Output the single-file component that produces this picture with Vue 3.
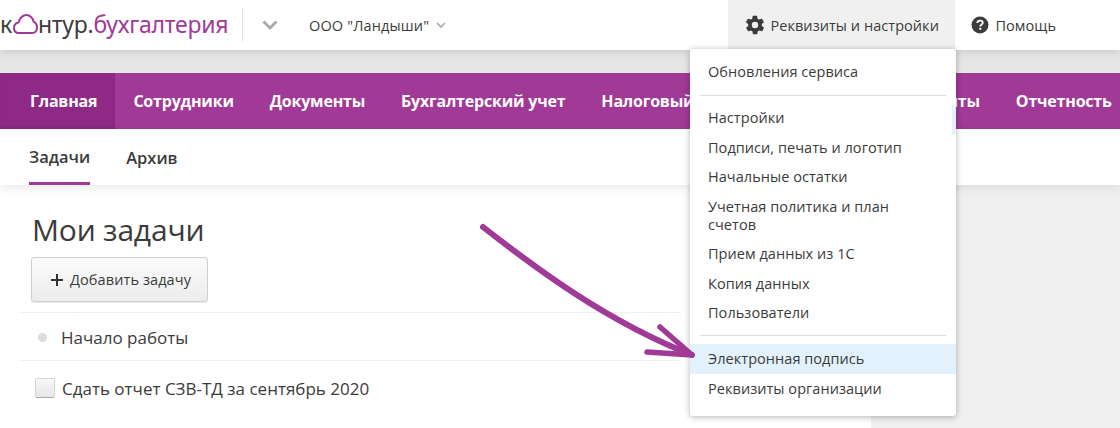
<script setup>
const tabs = [
  { label: 'Главная', kind: 'on' },
  { label: 'Сотрудники' },
  { label: 'Документы' },
  { label: 'Бухгалтерский учет' },
  { label: 'Налоговый учет', kind: 'wide' },
  { label: 'Контрагенты', kind: 'end' },
  { label: 'Отчетность' }
]
const menuTop = ['Настройки', 'Подписи, печать и логотип', 'Начальные остатки', 'Учетная политика и план счетов', 'Прием данных из 1С', 'Копия данных', 'Пользователи']
</script>

<template>
  <div class="page">
    <header class="top">
      <div class="logo"><span>к</span><svg class="cloud" width="25" height="22" viewBox="15 10 25 22"><path d="M21 30C17.500 30 16 27.500 16 25C16 22 18 20 20.500 19.500C22 15 25 12 28.500 12C32 12 35 15 35.500 18.500C37.500 19.500 39 22 39 24.500C39 28 37 30 34 30Z" fill="none" stroke="#a03a96" stroke-width="2"/></svg><span>нтур.</span><span class="logo-accent">бухгалтерия</span></div>
      <div class="sep"></div>
      <svg class="chev-big" width="16" height="10" viewBox="0 0 16 10"><path d="M1.500 1.500L8 8L14.500 1.500" fill="none" stroke="#a9a9a9" stroke-width="2.800"/></svg>
      <div class="org">ООО "Ландыши"<svg class="chev-small" width="10" height="7" viewBox="0 0 10 7"><path d="M1 1L5 5L9 1" fill="none" stroke="#a9a9a9" stroke-width="1.600"/></svg></div>
      <div class="top-right">
        <div class="top-btn active">
          <svg width="22" height="22" viewBox="0 0 24 24"><path fill="#3c3c3c" d="M19.400 13c.1-.3.100-.7.100-1s0-.7-.1-1l2.100-1.600c.2-.2.200-.4.100-.6l-2-3.500c-.1-.2-.4-.3-.6-.2l-2.500 1c-.5-.4-1.100-.7-1.700-1l-.4-2.600c0-.3-.2-.5-.5-.5h-4c-.3 0-.5.200-.5.500l-.4 2.600c-.6.300-1.200.6-1.700 1l-2.500-1c-.2-.1-.5 0-.6.200l-2 3.500c-.1.200-.1.400.1.600L4.600 11c-.1.300-.1.700-.1 1s0 .7.100 1l-2.100 1.600c-.2.200-.2.400-.1.600l2 3.500c.1.200.4.300.6.200l2.500-1c.5.400 1.100.7 1.700 1l.4 2.600c0 .3.200.5.500.5h4c.3 0 .5-.2.500-.5l.4-2.600c.6-.3 1.200-.6 1.700-1l2.500 1c.2.100.5 0 .6-.2l2-3.500c.1-.2.100-.4-.1-.6zM12 15.500a3.500 3.500 0 1 1 0-7 3.500 3.500 0 0 1 0 7z"/></svg>
          Реквизиты и настройки
        </div>
        <div class="top-btn help">
          <svg width="18" height="18" viewBox="0 0 18 18"><circle cx="9" cy="9" r="8.500" fill="#3c3c3c"/><path d="M6.300 7C6.400 5.500 7.500 4.600 9.100 4.600C10.700 4.600 11.800 5.500 11.800 6.800C11.800 8.600 9.300 8.600 9.300 10.600" fill="none" stroke="#fff" stroke-width="1.800"/><rect x="8.300" y="11.800" width="2" height="2" fill="#fff"/></svg>
          Помощь
        </div>
      </div>
    </header>

    <div class="band"></div>

    <nav class="nav">
      <div v-for="t in tabs" :key="t.label" class="tab" :class="t.kind">{{ t.label }}</div>
    </nav>

    <div class="sub">
      <div class="sub-item on">Задачи</div>
      <div class="sub-item">Архив</div>
    </div>

    <main class="body">
      <section class="content">
        <h1 class="title">Мои задачи</h1>
        <button class="add"><span class="plus"></span>Добавить задачу</button>
        <div class="rows">
          <div class="row row-head"><i class="dot"></i>Начало работы</div>
          <div class="row row-task"><i class="box"></i>Сдать отчет СЗВ-ТД за сентябрь 2020</div>
        </div>
      </section>
      <aside class="side"></aside>
    </main>

    <div class="menu">
      <div class="mi first">Обновления сервиса</div>
      <hr class="div" />
      <div class="group">
        <div v-for="m in menuTop" :key="m" class="mi">{{ m }}</div>
      </div>
      <hr class="div div2" />
      <div class="mi hl">Электронная подпись</div>
      <div class="mi">Реквизиты организации</div>
    </div>

    <svg class="arrow" width="240" height="150" viewBox="0 0 240 150">
      <path d="M5 5C60 48 130 100 214 133" fill="none" stroke="#a03a96" stroke-width="6" stroke-linecap="round"/>
      <path d="M169 130L214 133L182 105" fill="none" stroke="#a03a96" stroke-width="5.500" stroke-linecap="round" stroke-linejoin="round"/>
    </svg>
  </div>
</template>

<style>
html, body { margin: 0; background: #fff; }
</style>

<style scoped>
.page { position: relative; width: 1120px; height: 428px; overflow: hidden; background: #fff; font-family: "Open Sans", "Noto Sans", sans-serif; color: #3b3b3b; }
.top { position: relative; z-index: 2; height: 50px; display: flex; align-items: center; background: #fff; box-shadow: 0 2px 8px rgba(0,0,0,.12); }
.logo { display: flex; align-items: center; width: 242px; font-family: "Noto Sans", sans-serif; font-size: 23px; letter-spacing: -.25px; color: #3c3c3c; height: 50px; margin-top: -2px; white-space: nowrap; }
.cloud { margin: 0 0 0 1px; flex: none; }
.logo-accent { color: #a03a96; }
.sep { width: 1px; height: 34px; background: #e4e4e4; }
.chev-big { margin-left: 19px; }
.org { margin-left: 31px; font-size: 14.500px; letter-spacing: .15px; display: flex; align-items: center; gap: 7px; white-space: nowrap; }
.top-right { margin-left: auto; display: flex; height: 50px; margin-right: 48px; }
.top-btn { display: flex; align-items: center; font-size: 14.500px; letter-spacing: .05px; }
.help { padding: 0 16px; gap: 6px; }
.active { background: #f0f0f0; width: 227px; box-sizing: border-box; white-space: nowrap; padding-left: 16px; gap: 4px; }
.band { height: 23px; background: #e6e6e6; }
.nav { height: 56px; background: #a03a96; display: flex; color: #fff; font-weight: 700; font-size: 16px; letter-spacing: -.2px; }
.tab { display: flex; align-items: center; padding: 0 18px; white-space: nowrap; flex: none; }
.on.tab { background: #8e2a85; padding: 0 18px 0 30px; box-shadow: inset 0 -2px 2px rgba(0,0,0,.08); }
.wide { width: 232.500px; }
.end { width: 110px; justify-content: flex-end; }
.sub { position: relative; z-index: 1; height: 56px; display: flex; gap: 36px; padding-left: 29px; background: #fff; box-shadow: 0 3px 10px rgba(0,0,0,.09); font-size: 16.500px; font-weight: 600; }
.sub-item { display: flex; align-items: center; height: 56px; box-sizing: border-box; }
.sub-item.on { border-bottom: 3px solid #a03a96; padding-top: 2px; }
.body { display: flex; height: 243px; }
.content { width: 871px; box-sizing: border-box; padding: 24px 190px 0 20px; }
.side { flex: 1; background: #f0f0f0; }
.title { margin: 0 0 0 12px; font-size: 30px; line-height: 42px; font-weight: 400; letter-spacing: -.2px; }
.add { display: flex; align-items: center; margin: 6px 0 10px 11px; width: 177px; height: 45px; padding: 0 0 0 19px; border: 1px solid #cfcfcf; border-radius: 3px; background: linear-gradient(#fbfbfb, #ececec); font: 14.500px "Open Sans", sans-serif; letter-spacing: .1px; color: #3b3b3b; box-shadow: 0 1px 1px rgba(0,0,0,.1); }
.plus { width: 12px; height: 12px; margin-right: 7px; flex: none; background: linear-gradient(#333, #333) center / 12px 2px no-repeat, linear-gradient(#333, #333) center / 2px 12px no-repeat; }
.row { display: flex; align-items: center; font-size: 17px; border-top: 1px solid #efefef; padding-top: 2px; box-sizing: border-box; }
.row-head { padding-left: 18px; height: 48px; }
.row-task { padding-left: 15px; height: 55px; padding-top: 0; }
.dot { width: 9px; height: 9px; border-radius: 50%; background: #dcdcdc; margin-right: 14px; }
.box { width: 18px; height: 18px; margin-right: 7px; border: 1px solid #d4d4d4; border-bottom-color: #aaa; border-radius: 2px; background: linear-gradient(#f8f8f8, #e6e6e6); }
.menu { position: absolute; z-index: 3; left: 690px; top: 49px; width: 266px; height: 367px; box-sizing: border-box; padding-top: 8px; background: #fff; border-radius: 3px; box-shadow: 0 1px 6px rgba(0,0,0,.3); font-size: 14.500px; letter-spacing: .05px; line-height: 18px; }
.menu::after { content: ""; position: absolute; right: 0; top: 56px; width: 4px; height: 29px; background: #e3f1fc; }
.mi { padding: 6px 18px; }
.group .mi { padding: 5.750px 40px 5.750px 18px; }
.div { border: 0; border-top: 1px solid #dcdcdc; margin: 8px 10px 7.600px 10px; }
.div2 { margin: 7.400px 10px 8px; }
.hl { background: #e3f1fc; }
.arrow { position: absolute; z-index: 4; left: 478px; top: 222px; }
</style>
